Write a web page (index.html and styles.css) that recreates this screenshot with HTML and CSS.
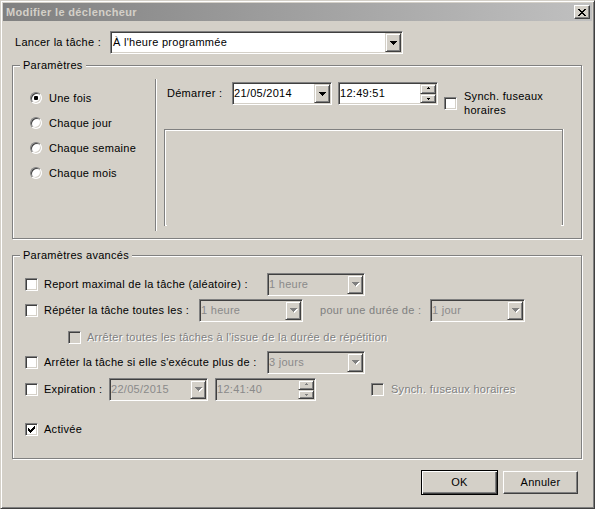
FILE: index.html
```html
<!DOCTYPE html>
<html lang="fr">
<head>
<meta charset="utf-8">
<title>Modifier le déclencheur</title>
<link rel="stylesheet" href="styles.css">
</head>
<body>
<div class="window">
  <div class="titlebar">
    <span class="title">Modifier le déclencheur</span>
    <span class="close-btn">
      <svg width="8" height="7" viewBox="0 0 8 7" shape-rendering="crispEdges"><path fill="#000" d="M0 0h2v1H0zM6 0h2v1H6zM1 1h2v1H1zM5 1h2v1H5zM2 2h4v1H2zM3 3h2v1H3zM2 4h4v1H2zM1 5h2v1H1zM5 5h2v1H5zM0 6h2v1H0zM6 6h2v1H6z"/></svg>
    </span>
  </div>

  <div class="content">
    <div class="launch-row">
      <span class="launch-label">Lancer la tâche :</span>
      <div class="field launch-combo">
        <span class="value pad">À l'heure programmée</span>
        <span class="dd-btn"><svg width="7" height="4" viewBox="0 0 7 4" shape-rendering="crispEdges"><path fill="#000" d="M0 0h7v1H0zM1 1h5v1H1zM2 2h3v1H2zM3 3h1v1H3z"/></svg></span>
      </div>
    </div>

    <div class="group group-params">
      <span class="group-title">Paramètres</span>
      <div class="params-body">
        <div class="radios">
          <div class="radio-row"><span class="radio checked"></span><span>Une fois</span></div>
          <div class="radio-row"><span class="radio"></span><span>Chaque jour</span></div>
          <div class="radio-row"><span class="radio"></span><span>Chaque semaine</span></div>
          <div class="radio-row"><span class="radio"></span><span>Chaque mois</span></div>
        </div>
        <div class="vsep"></div>
        <div class="schedule">
          <div class="start-row">
            <span class="start-label">Démarrer :</span>
            <div class="field date">
              <span class="value">21/05/2014</span>
              <span class="dd-btn"><svg width="7" height="4" viewBox="0 0 7 4" shape-rendering="crispEdges"><path fill="#000" d="M0 0h7v1H0zM1 1h5v1H1zM2 2h3v1H2zM3 3h1v1H3z"/></svg></span>
            </div>
            <div class="field time">
              <span class="value">12:49:51</span>
              <span class="spin">
                <span class="spin-btn"><svg width="5" height="3" viewBox="0 0 5 3" shape-rendering="crispEdges"><path fill="#000" d="M2 0h1v1H2zM1 1h3v1H1z"/></svg></span>
                <span class="spin-btn"><svg width="5" height="3" viewBox="0 0 5 3" shape-rendering="crispEdges"><path fill="#000" d="M1 1h3v1H1zM2 2h1v1H2z"/></svg></span>
              </span>
            </div>
            <div class="sync">
              <span class="check"></span>
              <span class="sync-label">Synch. fuseaux<br>horaires</span>
            </div>
          </div>
          <div class="inner-box"></div>
        </div>
      </div>
    </div>

    <div class="group group-adv">
      <span class="group-title">Paramètres avancés</span>
      <div class="adv-body">
        <div class="row r1">
          <span class="check"></span>
          <span class="lbl w223">Report maximal de la tâche (aléatoire) :</span>
          <div class="field disabled w98">
            <span class="value">1 heure</span>
            <span class="dd-btn"><svg width="8" height="5" viewBox="0 0 8 5" shape-rendering="crispEdges"><path fill="#fff" d="M1 1h7v1H1zM2 2h5v1H2zM3 3h3v1H3zM4 4h1v1H4z"/><path fill="#808080" d="M0 0h7v1H0zM1 1h5v1H1zM2 2h3v1H2zM3 3h1v1H3z"/></svg></span>
          </div>
        </div>
        <div class="row r2">
          <span class="check"></span>
          <span class="lbl w155">Répéter la tâche toutes les :</span>
          <div class="field disabled w104">
            <span class="value">1 heure</span>
            <span class="dd-btn"><svg width="8" height="5" viewBox="0 0 8 5" shape-rendering="crispEdges"><path fill="#fff" d="M1 1h7v1H1zM2 2h5v1H2zM3 3h3v1H3zM4 4h1v1H4z"/><path fill="#808080" d="M0 0h7v1H0zM1 1h5v1H1zM2 2h3v1H2zM3 3h1v1H3z"/></svg></span>
          </div>
          <span class="lbl dim duration">pour une durée de :</span>
          <div class="field disabled w95">
            <span class="value">1 jour</span>
            <span class="dd-btn"><svg width="8" height="5" viewBox="0 0 8 5" shape-rendering="crispEdges"><path fill="#fff" d="M1 1h7v1H1zM2 2h5v1H2zM3 3h3v1H3zM4 4h1v1H4z"/><path fill="#808080" d="M0 0h7v1H0zM1 1h5v1H1zM2 2h3v1H2zM3 3h1v1H3z"/></svg></span>
          </div>
        </div>
        <div class="row r3">
          <span class="check disabled"></span>
          <span class="lbl emboss">Arrêter toutes les tâches à l'issue de la durée de répétition</span>
        </div>
        <div class="row r4">
          <span class="check"></span>
          <span class="lbl w223">Arrêter la tâche si elle s'exécute plus de :</span>
          <div class="field disabled w98">
            <span class="value">3 jours</span>
            <span class="dd-btn"><svg width="8" height="5" viewBox="0 0 8 5" shape-rendering="crispEdges"><path fill="#fff" d="M1 1h7v1H1zM2 2h5v1H2zM3 3h3v1H3zM4 4h1v1H4z"/><path fill="#808080" d="M0 0h7v1H0zM1 1h5v1H1zM2 2h3v1H2zM3 3h1v1H3z"/></svg></span>
          </div>
        </div>
        <div class="row r5">
          <span class="check"></span>
          <span class="lbl w65">Expiration :</span>
          <div class="field disabled exp-date">
            <span class="value">22/05/2015</span>
            <span class="dd-btn"><svg width="8" height="5" viewBox="0 0 8 5" shape-rendering="crispEdges"><path fill="#fff" d="M1 1h7v1H1zM2 2h5v1H2zM3 3h3v1H3zM4 4h1v1H4z"/><path fill="#808080" d="M0 0h7v1H0zM1 1h5v1H1zM2 2h3v1H2zM3 3h1v1H3z"/></svg></span>
          </div>
          <div class="field disabled exp-time">
            <span class="value">12:41:40</span>
            <span class="spin">
              <span class="spin-btn"><svg width="5" height="3" viewBox="0 0 5 3" shape-rendering="crispEdges"><path fill="#808080" d="M2 0h1v1H2zM1 1h3v1H1z"/></svg></span>
              <span class="spin-btn"><svg width="5" height="3" viewBox="0 0 5 3" shape-rendering="crispEdges"><path fill="#808080" d="M1 1h3v1H1zM2 2h1v1H2z"/></svg></span>
            </span>
          </div>
          <span class="check disabled exp-check"></span>
          <span class="lbl emboss exp-sync">Synch. fuseaux horaires</span>
        </div>
        <div class="row r6">
          <span class="check on"><svg width="7" height="7" viewBox="0 0 7 7" shape-rendering="crispEdges"><path fill="#000" d="M6 0h1v1H6zM5 1h2v1H5zM0 2h1v1H0zM4 2h3v1H4zM0 3h2v1H0zM3 3h3v1H3zM0 4h5v1H0zM1 5h3v1H1zM2 6h1v1H2z"/></svg></span>
          <span class="lbl">Activée</span>
        </div>
      </div>
    </div>

    <div class="buttons">
      <span class="btn default"><span>OK</span></span>
      <span class="btn"><span>Annuler</span></span>
    </div>
  </div>
</div>
</body>
</html>
```

FILE: styles.css
```css
* {
  box-sizing: border-box;
}

html,
body {
  margin: 0;
  padding: 0;
}

body {
  background: #d4d0c8;
  font-family: "Liberation Sans", Arial, sans-serif;
  font-size: 11px;
  line-height: 13px;
  letter-spacing: 0.28px;
  color: #000;
}

/* ---------- window frame ---------- */
.window {
  width: 595px;
  height: 509px;
  background: #d4d0c8;
  border: 1px solid;
  border-color: #d4d0c8 #404040 #404040 #d4d0c8;
  box-shadow: inset 1px 1px #fff, inset -1px -1px #808080;
  padding: 2px;
  display: flex;
  flex-direction: column;
}

.titlebar {
  height: 18px;
  flex: none;
  background: linear-gradient(to right, #808080, #c0c0c0);
  display: flex;
  align-items: center;
  justify-content: space-between;
  padding: 0 2px 0 3px;
}

.title {
  font-weight: bold;
  color: #d4d0c8;
  line-height: 13px;
  letter-spacing: 0.35px;
}

.close-btn {
  width: 16px;
  height: 14px;
  background: #d4d0c8;
  border: 1px solid;
  border-color: #fff #404040 #404040 #fff;
  box-shadow: inset -1px -1px #808080;
  display: flex;
  align-items: center;
  justify-content: center;
  padding: 0 1px 0 0;
}

.close-btn svg,
.dd-btn svg,
.spin-btn svg,
.check svg {
  display: block;
}

.content {
  flex: 1;
  display: flex;
  flex-direction: column;
  padding-top: 10px;
}

/* ---------- top row ---------- */
.launch-row {
  display: flex;
  align-items: center;
  height: 23px;
  padding-left: 12px;
}

.launch-label {
  width: 95px;
  flex: none;
}

/* ---------- sunken fields ---------- */
.field {
  height: 23px;
  flex: none;
  background: #fff;
  border: 1px solid;
  border-color: #808080 #fff #fff #808080;
  box-shadow: inset 1px 1px #404040, inset -1px -1px #d4d0c8;
  padding: 1px;
  display: flex;
  align-items: stretch;
}

.field .value {
  flex: 1;
  display: flex;
  align-items: center;
  white-space: nowrap;
  overflow: hidden;
}

.field .value.pad {
  padding-left: 1px;
}

.field.disabled {
  background: #d4d0c8;
  color: #8a8a8a;
}

.launch-combo {
  width: 293px;
}

.dd-btn,
.spin-btn {
  background: #d4d0c8;
  border: 1px solid;
  border-color: #d4d0c8 #404040 #404040 #d4d0c8;
  box-shadow: inset 1px 1px #fff, inset -1px -1px #808080;
  display: flex;
  align-items: center;
  justify-content: center;
}

.dd-btn {
  width: 16px;
  flex: none;
  padding-left: 1px;
}

.spin {
  width: 16px;
  flex: none;
  display: flex;
  flex-direction: column;
}

.spin-btn {
  flex: 1;
}

/* ---------- group boxes ---------- */
.group {
  margin-left: 9px;
  width: 570px;
  flex: none;
  border: 1px solid #808080;
  box-shadow: inset 1px 1px #fff, 1px 1px #fff;
}

.group-title {
  display: block;
  width: fit-content;
  margin: -7px 0 0 7px;
  padding: 0 3px;
  line-height: 13px;
  background: #d4d0c8;
}

.group-params {
  margin-top: 11px;
  height: 174px;
}

.params-body {
  display: flex;
  margin-top: 7px;
}

.radios {
  width: 142px;
  flex: none;
  padding: 13px 0 0 17px;
  display: flex;
  flex-direction: column;
  gap: 13px;
}

.radio-row {
  display: flex;
  align-items: center;
  gap: 7px;
  height: 12px;
}

.radio {
  width: 12px;
  height: 12px;
  flex: none;
  border-radius: 50%;
  background: #fff;
  border: 1px solid;
  border-color: #808080 #fff #fff #808080;
  box-shadow: inset 1px 1px #404040, inset -1px -1px #d4d0c8;
  display: flex;
  align-items: center;
  justify-content: center;
}

.radio.checked::after {
  content: "";
  width: 4px;
  height: 4px;
  border-radius: 1px;
  background: #000;
}

.vsep {
  width: 2px;
  height: 152px;
  flex: none;
  border-left: 1px solid #808080;
  border-right: 1px solid #fff;
}

.schedule {
  padding: 3px 0 0 7px;
}

.start-row {
  display: flex;
  align-items: flex-start;
}

.start-label {
  width: 68px;
  height: 23px;
  flex: none;
  padding-left: 3px;
  display: flex;
  align-items: center;
}

.date {
  width: 100px;
}

.time {
  width: 100px;
  margin-left: 6px;
}

.sync {
  margin: 7px 0 0 6px;
  display: flex;
  align-items: center;
  gap: 7px;
  line-height: 14px;
}

.inner-box {
  position: relative;
  margin-top: 12px;
  width: 399px;
  height: 97px;
  border: 1px solid #808080;
  border-bottom: none;
  box-shadow: inset 1px 1px #fff, 1px 0 #fff;
}

.inner-box::before,
.inner-box::after {
  content: "";
  position: absolute;
  bottom: 0;
  width: 2px;
  height: 1px;
  background: #fff;
}

.inner-box::before {
  left: 0;
}

.inner-box::after {
  right: -1px;
}

/* ---------- checkboxes ---------- */
.check {
  width: 13px;
  height: 13px;
  flex: none;
  background: #fff;
  border: 1px solid;
  border-color: #808080 #fff #fff #808080;
  box-shadow: inset 1px 1px #404040, inset -1px -1px #d4d0c8;
  display: flex;
  align-items: center;
  justify-content: center;
}

.check.disabled {
  background: #d4d0c8;
}

/* ---------- advanced group ---------- */
.group-adv {
  margin-top: 16px;
  height: 204px;
}

.adv-body {
  padding-left: 12px;
  display: flex;
  flex-direction: column;
}

.row {
  display: flex;
  align-items: center;
  height: 23px;
}

.row .check + .lbl {
  margin-left: 6px;
}

.lbl {
  flex: none;
  white-space: nowrap;
}

.w223 { width: 223px; }
.w155 { width: 155px; }
.w65 { width: 65px; }
.w98 { width: 98px; }
.w104 { width: 104px; }
.w95 { width: 95px; }

.dim {
  color: #808080;
}

.emboss {
  color: #808080;
  text-shadow: 1px 1px 0 #fff;
}

.r1 { margin-top: 11px; }
.r2 { margin-top: 3px; }
.r3 { margin-top: 9px; height: 13px; padding-left: 43px; }
.r4 { margin-top: 7px; }
.r5 { margin-top: 4px; }
.r6 { margin-top: 22px; height: 13px; }

.duration {
  width: 110px;
  margin-left: 17px;
}

.exp-date {
  width: 99px;
}

.exp-time {
  width: 101px;
  margin-left: 7px;
}

.exp-check {
  margin-left: 55px;
}

.row .exp-check + .exp-sync {
  margin-left: 7px;
}

/* ---------- buttons ---------- */
.buttons {
  display: flex;
  justify-content: flex-end;
  gap: 4px;
  padding-right: 13px;
  margin-top: 11px;
}

.btn {
  width: 75px;
  height: 23px;
  margin: 1px;
  background: #d4d0c8;
  border: 1px solid;
  border-color: #fff #404040 #404040 #fff;
  box-shadow: inset -1px -1px #808080;
  display: flex;
  align-items: center;
  justify-content: center;
}

.btn.default {
  width: 77px;
  height: 25px;
  margin: 0;
  border: 1px solid #000;
  box-shadow: inset 1px 1px #fff, inset -1px -1px #404040, inset -2px -2px #808080;
}
```
